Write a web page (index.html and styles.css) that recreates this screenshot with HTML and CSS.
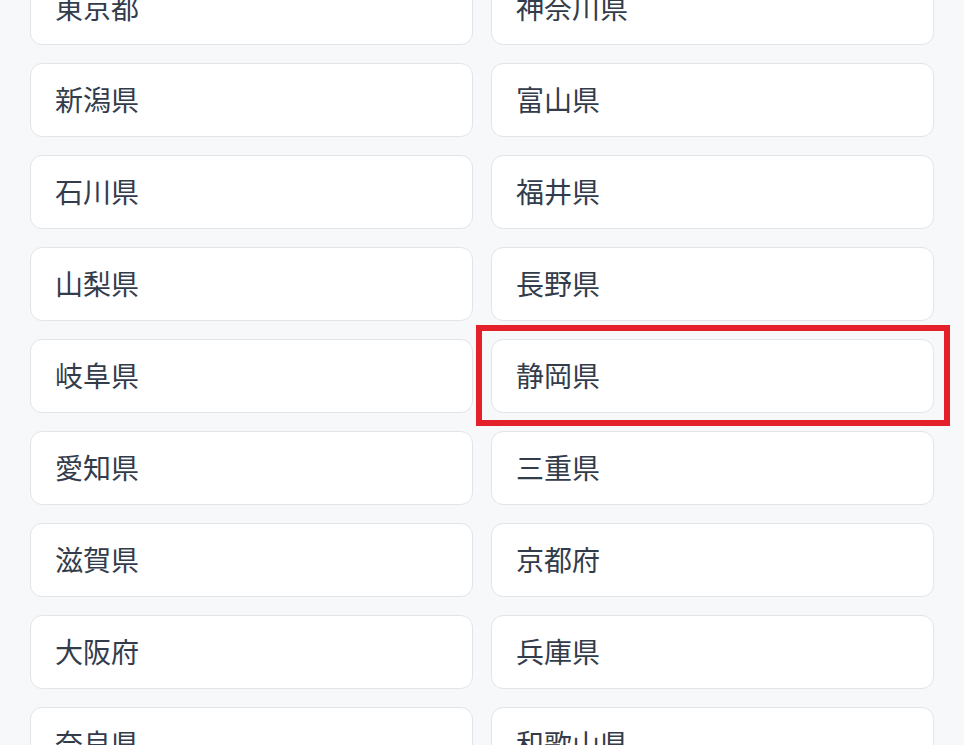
FILE: index.html
```html
<!DOCTYPE html>
<html lang="ja">
<head>
<meta charset="utf-8">
<title>都道府県</title>
<link rel="stylesheet" href="styles.css">
</head>
<body>
<main class="page">
  <ul class="pref-grid">
    <li class="pref-card">東京都</li>
    <li class="pref-card">神奈川県</li>
    <li class="pref-card">新潟県</li>
    <li class="pref-card">富山県</li>
    <li class="pref-card">石川県</li>
    <li class="pref-card">福井県</li>
    <li class="pref-card">山梨県</li>
    <li class="pref-card">長野県</li>
    <li class="pref-card">岐阜県</li>
    <li class="pref-card is-highlighted">静岡県<span class="highlight-frame"></span></li>
    <li class="pref-card">愛知県</li>
    <li class="pref-card">三重県</li>
    <li class="pref-card">滋賀県</li>
    <li class="pref-card">京都府</li>
    <li class="pref-card">大阪府</li>
    <li class="pref-card">兵庫県</li>
    <li class="pref-card">奈良県</li>
    <li class="pref-card">和歌山県</li>
  </ul>
</main>
</body>
</html>
```
FILE: styles.css
```css
html, body {
  margin: 0;
  padding: 0;
  background: #f7f8fa;
  height: 100%;
  overflow: hidden;
}

body {
  font-family: "Noto Sans CJK JP", "Noto Sans", sans-serif;
  color: #333c4b;
}

.page {
  padding: 0 30px;
}

.pref-grid {
  list-style: none;
  margin: -29px 0 0;
  padding: 0;
  display: grid;
  grid-template-columns: 1fr 1fr;
  column-gap: 18px;
  row-gap: 18px;
}

.pref-card {
  position: relative;
  box-sizing: border-box;
  height: 74px;
  display: flex;
  align-items: center;
  padding: 0 24px 2px;
  background: #ffffff;
  border: 1px solid #e2e4e8;
  border-radius: 12px;
  font-size: 28px;
  line-height: 1;
  letter-spacing: 0;
}

.highlight-frame {
  position: absolute;
  top: -15px;
  left: -16px;
  right: -17px;
  bottom: -14px;
  border: 6px solid #e4202b;
  pointer-events: none;
}
```
